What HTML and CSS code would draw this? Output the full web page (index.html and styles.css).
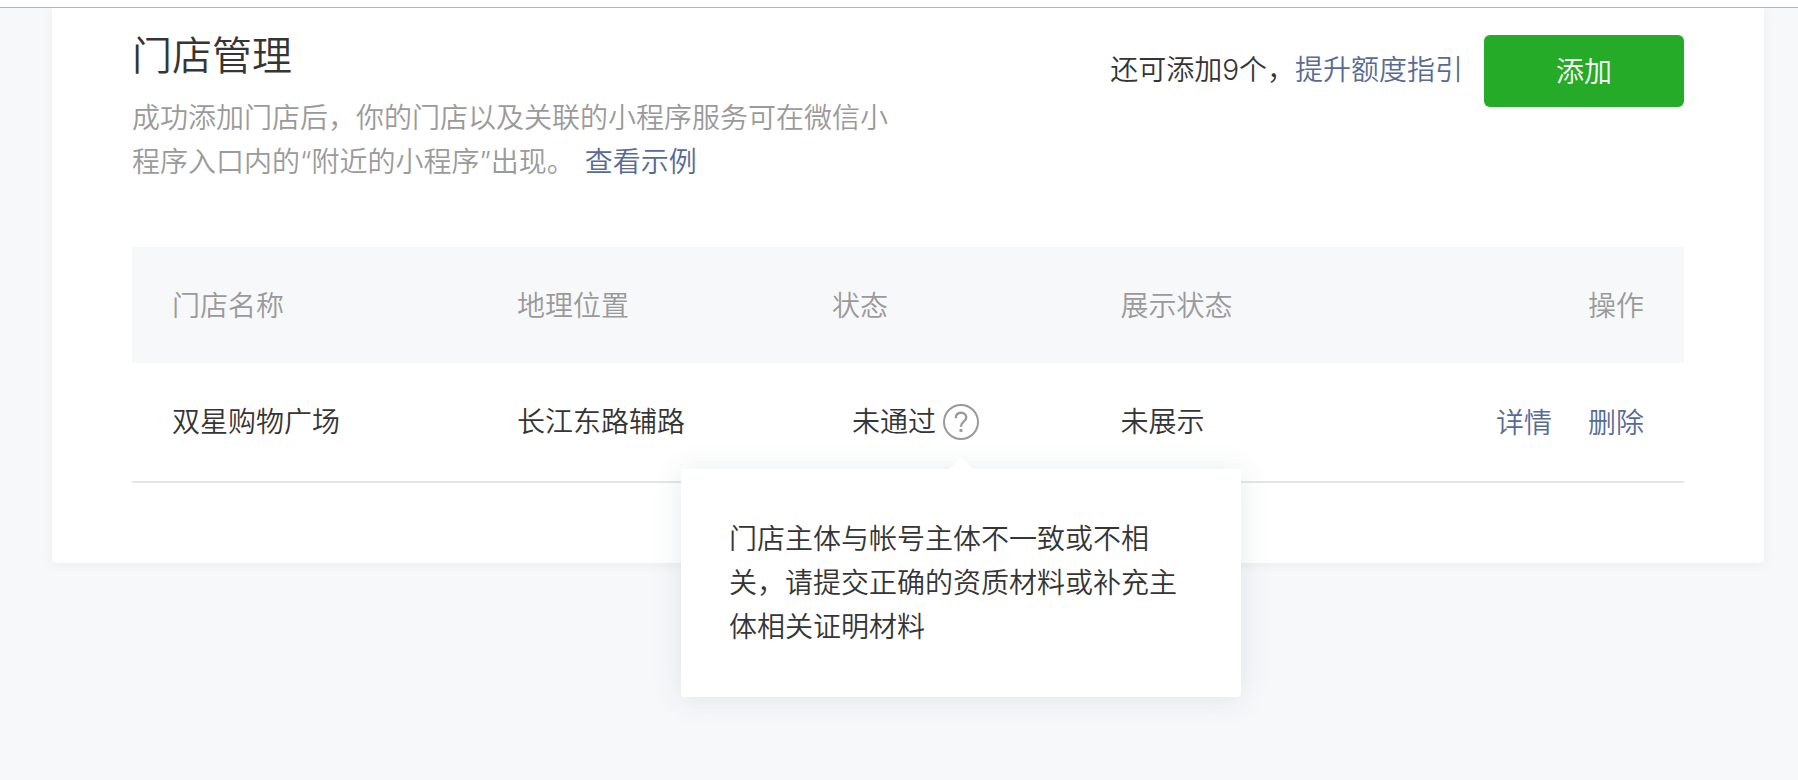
FILE: index.html
```html
<!DOCTYPE html>
<html lang="zh-CN">
<head>
  <meta charset="UTF-8">
  <meta name="viewport" content="width=device-width, initial-scale=1.0">
  <title>门店管理</title>
  <link rel="stylesheet" href="styles.css">
</head>
<body>

  <div class="topbar"></div>

  <main class="card">
    <header class="head">
      <div class="intro">
        <h1 class="title">门店管理</h1>
        <p class="desc">成功添加门店后，你的门店以及关联的小程序服务可在微信小程序入口内的“附近的小程序”出现。<a href="#" class="link example">查看示例</a></p>
      </div>
      <div class="tools">
        <span class="quota">还可添加9个，<a href="#" class="link">提升额度指引</a></span>
        <button type="button" class="add-btn">添加</button>
      </div>
    </header>

    <table class="stores">
      <thead>
        <tr>
          <th class="col-name">门店名称</th>
          <th class="col-place">地理位置</th>
          <th class="col-status">状态</th>
          <th class="col-show">展示状态</th>
          <th class="col-ops">操作</th>
        </tr>
      </thead>
      <tbody>
        <tr>
          <td class="col-name">双星购物广场</td>
          <td class="col-place">长江东路辅路</td>
          <td class="col-status">
            <div class="status">
              未通过
              <div class="help">
                <button type="button" class="help-btn" aria-describedby="reason">
                  <svg width="36" height="36" viewBox="0 0 36 36" fill="none" stroke="#9a9a9a" stroke-width="2">
                    <circle cx="18" cy="18" r="17"/>
                    <path stroke-width="2.4" d="M12.8 14.2c0-3.4 2.2-5.4 5.3-5.4 3 0 5.1 1.9 5.1 4.6 0 2-.9 3.2-2.7 4.5-1.8 1.3-2.4 2.2-2.4 4.1v.8"/>
                    <circle cx="18" cy="26.4" r="1.7" fill="#9a9a9a" stroke="none"/>
                  </svg>
                </button>
                <div class="popover" id="reason" role="tooltip">门店主体与帐号主体不一致或不相关，请提交正确的资质材料或补充主体相关证明材料</div>
              </div>
            </div>
          </td>
          <td class="col-show">未展示</td>
          <td class="col-ops">
            <div class="ops">
              <a href="#" class="link">详情</a>
              <a href="#" class="link">删除</a>
            </div>
          </td>
        </tr>
      </tbody>
    </table>
  </main>

</body>
</html>
```

FILE: styles.css
```css
body {
  margin: 0;
  min-height: 100vh;
  background-color: #f7f8fa;
  color: #353535;
  font-family: Inter, "Noto Sans CJK SC", sans-serif;
  font-size: 28px;
  font-weight: 350;
  line-height: 44px;
}

.topbar {
  position: relative; /* stays above the card shadow */
  z-index: 1;
  height: 7px;
  background-color: #fff;
  border-bottom: 1px solid #b2b2b2;
}

.card {
  margin: 0 34px 0 52px;
  padding: 0 80px 80px;
  background-color: #fff;
  border-radius: 0 0 4px 4px;
  box-shadow: 0 2px 12px rgba(0, 0, 0, 0.05);
}

.link {
  color: #576b95;
  text-decoration: none;
}

/* Heading and add button */
.head {
  display: flex;
  justify-content: space-between;
  align-items: flex-start;
  padding: 20px 0 63px;
}

.title {
  margin: 0 0 12px;
  font-size: 40px;
  font-weight: 350;
  line-height: 56px;
}

.desc {
  margin: 0;
  max-width: 760px;
  color: #9a9a9a;
}

.example {
  margin-left: 10px;
}

.tools {
  display: flex;
  align-items: center;
  gap: 21px;
  padding-top: 7px;
}

.quota {
  padding-bottom: 2px;
}

.add-btn {
  width: 200px;
  height: 72px;
  padding: 2px 0 0;
  border: 0;
  border-radius: 6px;
  background-color: #26ab28;
  color: #fff;
  font: inherit;
}

/* Store list */
.stores {
  width: 100%;
  table-layout: fixed;
  border-collapse: separate;
  border-spacing: 0;
}

.stores th,
.stores td {
  padding: 36px 0;
  font-weight: 350;
  text-align: left;
}

.stores th {
  padding: 37px 0 35px;
  background-color: #f7f8fa;
  color: #9a9a9a;
}

.stores td {
  border-bottom: 2px solid #e4e6e6;
}

.stores .col-name {
  width: 24.8%;
  padding-left: 40px;
  box-sizing: border-box;
}

.col-place {
  width: 20.3%;
}

.col-status {
  width: 18.6%;
}

.stores .col-ops {
  padding-right: 40px;
  text-align: right;
}

.status {
  display: flex;
  align-items: center;
  gap: 7px;
  padding-left: 20px;
}

.ops {
  display: flex;
  justify-content: flex-end;
  gap: 36px;
  padding-top: 2px;
}

/* Reason popover under the question mark */
.help {
  position: relative;
  margin-top: 2px;
}

.help-btn {
  display: block;
  padding: 0;
  border: 0;
  background: none;
}

.popover {
  position: absolute;
  top: calc(100% + 26px);
  left: 50%;
  z-index: 1;
  box-sizing: border-box;
  width: 560px;
  margin-left: -280px;
  padding: 48px;
  border-radius: 4px;
  background-color: #fff;
  box-shadow: 0 2px 30px rgba(60, 80, 100, 0.12);
}

.popover::before {
  content: "";
  position: absolute;
  top: -12px;
  left: 50%;
  margin-left: -12px;
  border: 12px solid transparent;
  border-top: 0;
  border-bottom-color: #fff;
}
```
